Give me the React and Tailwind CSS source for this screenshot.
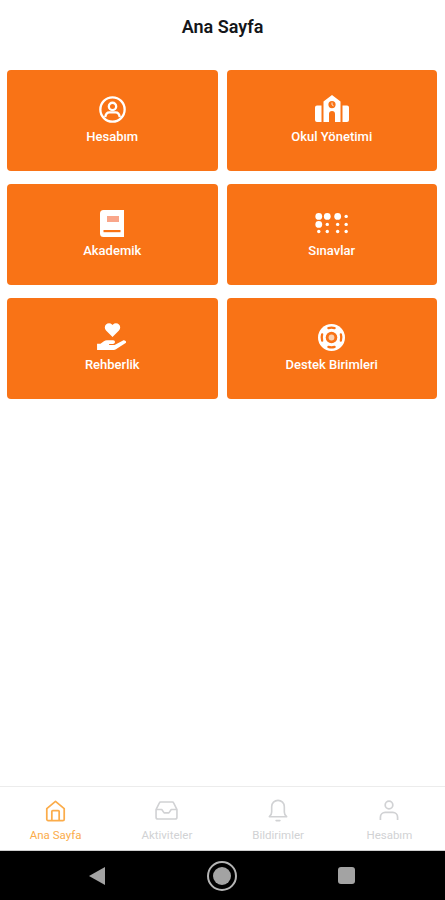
import React from 'react';

const font = { fontFamily: 'Roboto, sans-serif' };

const AccountIcon = () => (
  <svg width="27" height="27" viewBox="0 0 28 28" fill="none" stroke="white" strokeWidth="2.4">
    <circle cx="14" cy="14" r="12.6" />
    <circle cx="14" cy="10.8" r="3.8" />
    <path d="M6.5 22c.4-3.6 2.6-5 4.4-5h6.2c1.8 0 4 1.4 4.4 5" />
  </svg>
);

const SchoolIcon = () => (
  <svg width="34" height="28" viewBox="0 0 34 28" fill="white">
    <path fillRule="evenodd" d="M17 0l8.5 6.5V27H20v-8a3 3 0 0 0-6 0v8H8.500V6.500zM17 6a3.600 3.600 0 1 0 0 7.200 3.600 3.600 0 0 0 0-7.200z" />
    <path d="M0 12.500a2 2 0 0 1 2-2h4.500V27H2a2 2 0 0 1-2-2zM27.500 10.500H32a2 2 0 0 1 2 2V25a2 2 0 0 1-2 2h-4.500z" />
    <path d="M17 7.500v2.400l1.600 1" stroke="white" strokeWidth="0.8" fill="none" />
  </svg>
);

const BookIcon = () => (
  <svg width="24" height="27" viewBox="0 0 24 27">
    <path fill="white" d="M3.500 0H24v27H3.500A3.500 3.500 0 0 1 0 23.500v-20A3.500 3.500 0 0 1 3.500 0z" />
    <rect x="7" y="6" width="12" height="6" fill="#f9a68a" />
    <rect x="3.500" y="20" width="17" height="2.200" fill="#f97316" />
  </svg>
);

const BrailleIcon = () => (
  <svg width="34" height="22" viewBox="0 0 36 22" fill="white">
    <circle cx="4" cy="4" r="3.600" />
    <circle cx="13" cy="4" r="3.600" />
    <circle cx="24" cy="4" r="3.600" />
    <circle cx="33" cy="4" r="1.800" />
    <circle cx="4" cy="12.500" r="3.600" />
    <circle cx="13" cy="12.500" r="1.800" />
    <circle cx="24" cy="12.500" r="1.800" />
    <circle cx="33" cy="12.500" r="1.800" />
    <circle cx="4" cy="20" r="1.800" />
    <circle cx="13" cy="20" r="1.800" />
    <circle cx="24" cy="20" r="1.800" />
    <circle cx="33" cy="20" r="1.800" />
  </svg>
);

const CareIcon = () => (
  <svg width="31" height="28" viewBox="0 0 32 29" fill="white">
    <path d="M16 14.500L9.300 7.800a4.400 4.400 0 0 1 0-6.200 4.400 4.400 0 0 1 6.200 0l.5.5.5-.5a4.400 4.400 0 0 1 6.200 0 4.400 4.400 0 0 1 0 6.200z" />
    <path d="M0 21.500h3.500l3.600-2.700c1-.7 2-.9 3.200-.9h6.400a1.900 1.900 0 0 1 0 3.800h-4.200v1h5.600l8.800-4.600c1.400-.7 3.600.6 3.100 2-.1.4-.4.7-.8 1l-9.600 6.200c-.7.4-1.400.7-2.200.7H0z" />
  </svg>
);

const LifebuoyIcon = () => (
  <svg width="27" height="27" viewBox="0 0 28 28" fill="none">
    <circle cx="14" cy="14" r="14" fill="white" />
    <circle cx="14" cy="14" r="6" fill="#f97316" />
    <circle cx="14" cy="14" r="3" fill="#fbd0b0" />
    <path d="M10.800 4.300a10.200 10.200 0 0 1 6.400 0M10.800 23.700a10.200 10.200 0 0 0 6.400 0M4.300 10.800a10.200 10.200 0 0 0 0 6.400M23.700 10.800a10.200 10.200 0 0 1 0 6.400" stroke="#f97316" strokeWidth="2.400" strokeLinecap="round" />
  </svg>
);

const HomeIcon = () => (
  <svg width="21" height="22" viewBox="0 0 22 24" fill="none" stroke="#fbac4a" strokeWidth="1.900" strokeLinejoin="round">
    <path d="M1.500 9.500L11 1.500l9.500 8V21a1.500 1.500 0 0 1-1.500 1.500H3A1.500 1.500 0 0 1 1.500 21z" />
    <path d="M7 22.500V12.500a1 1 0 0 1 1-1h6a1 1 0 0 1 1 1v10" />
  </svg>
);

const InboxIcon = () => (
  <svg width="23" height="19" viewBox="0 0 24 20" fill="none" stroke="#d1d2d4" strokeWidth="1.700" strokeLinejoin="round">
    <path d="M1 9l3.500-7a1.500 1.500 0 0 1 1.300-.9h12.400a1.500 1.500 0 0 1 1.300.9L23 9v8a2 2 0 0 1-2 2H3a2 2 0 0 1-2-2z" />
    <path d="M1 9h6l2.500 3.500h5L17 9h6" />
  </svg>
);

const BellIcon = () => (
  <svg width="20" height="23" viewBox="0 0 20 24" fill="none" stroke="#d1d2d4" strokeWidth="1.700" strokeLinecap="round" strokeLinejoin="round">
    <path d="M1 18.500c1.500-1.200 2.400-2.600 2.400-5V8a6.600 6.600 0 0 1 13.200 0v5.500c0 2.400.9 3.800 2.400 5z" />
    <path d="M8 22.500h4" />
  </svg>
);

const UserIcon = () => (
  <svg width="20" height="21" viewBox="0 0 20 22" fill="none" stroke="#d1d2d4" strokeWidth="1.800">
    <circle cx="10" cy="5.200" r="4" />
    <path d="M1 21v-3a5 5 0 0 1 5-5h8a5 5 0 0 1 5 5v3" />
  </svg>
);

const menuItems = [
  { label: 'Hesabım', icon: <AccountIcon /> },
  { label: 'Okul Yönetimi', icon: <SchoolIcon /> },
  { label: 'Akademik', icon: <BookIcon /> },
  { label: 'Sınavlar', icon: <BrailleIcon /> },
  { label: 'Rehberlik', icon: <CareIcon /> },
  { label: 'Destek Birimleri', icon: <LifebuoyIcon /> },
];

const tabs = [
  { label: 'Ana Sayfa', icon: <HomeIcon />, active: true },
  { label: 'Aktiviteler', icon: <InboxIcon /> },
  { label: 'Bildirimler', icon: <BellIcon /> },
  { label: 'Hesabım', icon: <UserIcon /> },
];

export default function App() {
  return (
    <div className="h-[900px] flex flex-col bg-white" style={font}>
      <header className="h-[52px] flex items-center justify-center">
        <h1 className="text-[18px] font-semibold text-[#14161a]">Ana Sayfa</h1>
      </header>

      <main className="flex-1 pt-[18px] pl-[7px] pr-[8px]">
        <div className="grid grid-cols-2 gap-x-[9px] gap-y-[13px]">
          {menuItems.map((item) => (
            <div key={item.label} className="h-[101px] pt-[25px] rounded-[4px] bg-[#f97316] flex flex-col items-center text-white">
              <div className="h-[28px] flex items-center justify-center">{item.icon}</div>
              <span className="mt-[6px] text-[13px] font-medium leading-[16px]">{item.label}</span>
            </div>
          ))}
        </div>
      </main>

      <nav className="h-[64px] border-t border-[#ececec] grid grid-cols-4">
        {tabs.map((tab) => (
          <div key={tab.label} className="pt-[6px] flex flex-col items-center">
            <div className="h-[35px] flex items-center justify-center">{tab.icon}</div>
            <span className={`text-[11.5px] leading-[14px] ${tab.active ? 'text-[#fbac4a]' : 'text-[#d1d2d4]'}`}>
              {tab.label}
            </span>
          </div>
        ))}
      </nav>

      {/* Android system bar */}
      <div className="h-[50px] pr-[1px] bg-black border-t border-[#cfcfcf] flex items-center justify-center gap-[102px]">
        <svg width="16" height="18" viewBox="0 0 16 18">
          <path d="M16 0v18L0 9z" fill="#a3a3a3" />
        </svg>
        <div className="w-[30px] h-[30px] rounded-full border-2 border-[#b5b5b5] flex items-center justify-center">
          <div className="w-[18px] h-[18px] rounded-full bg-[#a3a3a3]" />
        </div>
        <div className="w-[17px] h-[17px] rounded-[3px] bg-[#a3a3a3] ml-[-1px]" />
      </div>
    </div>
  );
}
